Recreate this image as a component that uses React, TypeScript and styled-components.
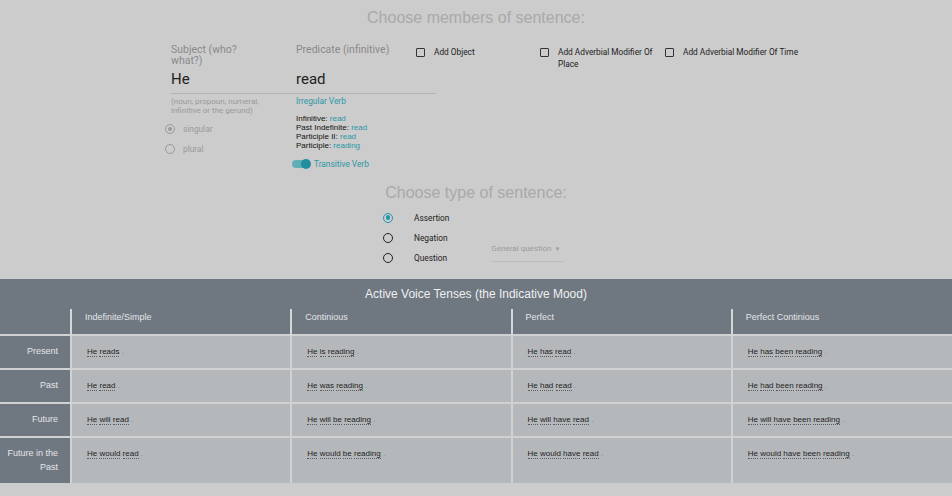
import React, { useState } from 'react';
import styled, { createGlobalStyle } from 'styled-components';

const GlobalStyle = createGlobalStyle`
  body {
    margin: 0;
    background: #cccccc;
    font-family: Roboto, 'Liberation Sans', sans-serif;
  }
`;

const Page = styled.div`
  width: 952px;
  display: flex;
  flex-direction: column;
`;

const SectionTitle = styled.div<{ $top: number }>`
  margin-top: ${(p) => p.$top}px;
  text-align: center;
  font-family: 'Liberation Sans', Arial, sans-serif;
  font-size: 16px;
  line-height: 18px;
  color: #a9a9a9;
`;

const MembersRow = styled.div`
  display: flex;
  margin: 17px 0 0 171px;
`;

const Column = styled.div<{ $width: number }>`
  display: flex;
  flex-direction: column;
  width: ${(p) => p.$width}px;
`;

const FieldLabel = styled.div`
  width: 95px;
  height: 22px;
  font-size: 10.5px;
  line-height: 11px;
  color: #8a8a8a;
`;

const WideLabel = styled(FieldLabel)`
  width: 120px;
`;

const FieldInput = styled.div<{ $width: number }>`
  width: ${(p) => p.$width}px;
  height: 28px;
  box-sizing: border-box;
  padding-top: 4px;
  font-size: 15px;
  line-height: 18px;
  color: #222;
  border-bottom: 1px solid #b4b4b4;
`;

const Helper = styled.div`
  margin-top: 3px;
  font-size: 8px;
  line-height: 9px;
  color: #999;
`;

const RadioList = styled.div<{ $top: number; $left: number }>`
  display: flex;
  flex-direction: column;
  margin: ${(p) => p.$top}px 0 0 ${(p) => p.$left}px;
`;

const RadioRow = styled.label<{ $gap: number }>`
  display: flex;
  align-items: center;
  gap: ${(p) => p.$gap}px;
  height: 20px;
  font-size: 8.3px;
  cursor: pointer;
`;

const RadioCircle = styled.span<{ $on: boolean; $tone: string }>`
  position: relative;
  width: 10px;
  height: 10px;
  box-sizing: border-box;
  border-radius: 50%;
  border: 1.4px solid ${(p) => p.$tone};
  &::after {
    content: '';
    position: absolute;
    inset: 1.6px;
    border-radius: 50%;
    background: ${(p) => (p.$on ? p.$tone : 'transparent')};
  }
`;

const RadioText = styled.span<{ $tone: string }>`
  color: ${(p) => p.$tone};
`;

const Teal = styled.span`
  color: #2a97a6;
`;

const VerbKind = styled.div`
  margin-top: 3px;
  font-size: 8.3px;
  line-height: 9px;
  color: #2a97a6;
`;

const Forms = styled.div`
  margin-top: 7.5px;
  font-family: 'Liberation Sans', Arial, sans-serif;
  font-size: 8px;
  line-height: 9px;
  color: #111;
`;

const ToggleRow = styled.div`
  display: flex;
  align-items: center;
  gap: 4px;
  height: 12px;
  margin: 8px 0 0 -4px;
  font-size: 8.3px;
  color: #2a97a6;
`;

const Track = styled.span`
  position: relative;
  width: 18px;
  height: 8px;
  border-radius: 4px;
  background: #63adb7;
`;

const Thumb = styled.span`
  position: absolute;
  right: -1px;
  top: -1px;
  width: 10px;
  height: 10px;
  border-radius: 50%;
  background: #1f8e9d;
`;

const CheckGroup = styled.label<{ $width: number }>`
  display: flex;
  align-items: flex-start;
  gap: 9px;
  width: ${(p) => p.$width}px;
  padding-top: 2px;
  font-size: 8.3px;
  line-height: 12px;
  color: #222;
`;

const CheckBox = styled.span`
  flex: none;
  width: 9px;
  height: 9px;
  margin-top: 2px;
  box-sizing: border-box;
  border: 1.3px solid #333;
  border-radius: 1px;
`;

const CheckText = styled.span<{ $width: number }>`
  width: ${(p) => p.$width}px;
`;

const TypeRow = styled.div`
  display: flex;
  align-items: flex-end;
  margin: 6px 0 0 383px;
`;

const SelectBox = styled.div`
  display: flex;
  align-items: flex-start;
  justify-content: space-between;
  width: 73px;
  height: 22px;
  box-sizing: border-box;
  padding-top: 4px;
  margin: 0 0 6px 42px;
  font-size: 8px;
  line-height: 10px;
  color: #9b9b9b;
  border-bottom: 1px solid #bdbdbd;
`;

const Caret = styled.span`
  font-size: 6px;
  margin-right: 4px;
`;

const Table = styled.table`
  margin-top: 11px;
  width: 952px;
  border-collapse: collapse;
  table-layout: fixed;
  font-family: 'Liberation Sans', Arial, sans-serif;
`;

const TitleCell = styled.th`
  height: 30px;
  padding: 0;
  background: #6f7780;
  color: #eef0f2;
  font-size: 12px;
  font-weight: normal;
`;

const HeadCell = styled.th<{ $first?: boolean }>`
  height: 16px;
  padding: 0 13px 9px;
  background: #6f7780;
  color: #e4e6e8;
  font-size: 9px;
  line-height: 12px;
  font-weight: normal;
  text-align: left;
  vertical-align: middle;
  border-left: ${(p) => (p.$first ? 'none' : '2px solid #d5d6d8')};
`;

const RowHead = styled.th`
  padding: 8px 12px 9px 4px;
  background: #6f7780;
  color: #e4e6e8;
  font-size: 9px;
  line-height: 14px;
  font-weight: normal;
  text-align: right;
  vertical-align: middle;
  border-top: 2px solid #d0d1d3;
`;

const Cell = styled.td`
  padding: 10px 15px;
  background: #b5b8bb;
  font-size: 8px;
  line-height: 12px;
  color: #1e1e1e;
  vertical-align: top;
  border-top: 2px solid #d0d1d3;
  border-left: 2px solid #d0d1d3;
`;

const Word = styled.span`
  border-bottom: 1px dotted #5a5d60;
`;

const Dot = styled.span`
  color: #7c7f82;
`;

const tenses = ['Indefinite/Simple', 'Continious', 'Perfect', 'Perfect Continious'];

const rows = [
  { name: 'Present', forms: ['He reads', 'He is reading', 'He has read', 'He has been reading'] },
  { name: 'Past', forms: ['He read', 'He was reading', 'He had read', 'He had been reading'] },
  { name: 'Future', forms: ['He will read', 'He will be reading', 'He will have read', 'He will have been reading'] },
  {
    name: 'Future in the Past',
    forms: ['He would read', 'He would be reading', 'He would have read', 'He would have been reading'],
  },
];

const Sentence = ({ text }: { text: string }) => (
  <>
    {text.split(' ').map((w, i) => (
      <React.Fragment key={`w-${i}`}>
        {i > 0 && ' '}
        <Word>{w}</Word>
      </React.Fragment>
    ))}
    <Dot> .</Dot>
  </>
);

const App = () => {
  const [number, setNumber] = useState('singular');
  const [kind, setKind] = useState('Assertion');

  return (
    <Page>
      <GlobalStyle />
      <SectionTitle $top={9}>Choose members of sentence:</SectionTitle>

      <MembersRow>
        <Column $width={125}>
          <FieldLabel>Subject (who? what?)</FieldLabel>
          <FieldInput $width={125}>He</FieldInput>
          <Helper>
            (noun, propoun, numeral,
            <br />
            infinitive or the gerund)
          </Helper>
          <RadioList $top={4} $left={-6}>
            {['singular', 'plural'].map((n) => (
              <RadioRow key={n} $gap={8} onClick={() => setNumber(n)}>
                <RadioCircle $on={number === n} $tone="#9a9a9a" />
                <RadioText $tone="#9a9a9a">{n}</RadioText>
              </RadioRow>
            ))}
          </RadioList>
        </Column>

        <Column $width={120}>
          <WideLabel>Predicate (infinitive)</WideLabel>
          <FieldInput $width={140}>read</FieldInput>
          <VerbKind>Irregular Verb</VerbKind>
          <Forms>
            Infinitive: <Teal>read</Teal>
            <br />
            Past Indefinite: <Teal>read</Teal>
            <br />
            Participle II: <Teal>read</Teal>
            <br />
            Participle: <Teal>reading</Teal>
          </Forms>
          <ToggleRow>
            <Track>
              <Thumb />
            </Track>
            Transitive Verb
          </ToggleRow>
        </Column>

        <CheckGroup $width={124}>
          <CheckBox />
          <CheckText $width={100}>Add Object</CheckText>
        </CheckGroup>
        <CheckGroup $width={125}>
          <CheckBox />
          <CheckText $width={96}>Add Adverbial Modifier Of Place</CheckText>
        </CheckGroup>
        <CheckGroup $width={150}>
          <CheckBox />
          <CheckText $width={130}>Add Adverbial Modifier Of Time</CheckText>
        </CheckGroup>
      </MembersRow>

      <SectionTitle $top={14}>Choose type of sentence:</SectionTitle>

      <TypeRow>
        <RadioList $top={0} $left={0}>
          {['Assertion', 'Negation', 'Question'].map((k) => (
            <RadioRow key={k} $gap={21} onClick={() => setKind(k)}>
              <RadioCircle $on={kind === k} $tone={kind === k ? '#2196a6' : '#222'} />
              <RadioText $tone="#222">{k}</RadioText>
            </RadioRow>
          ))}
        </RadioList>
        <SelectBox>
          General question
          <Caret>▼</Caret>
        </SelectBox>
      </TypeRow>

      <Table>
        <colgroup>
          <col style={{ width: 71 }} />
          <col />
          <col />
          <col />
          <col />
        </colgroup>
        <thead>
          <tr>
            <TitleCell colSpan={5}>Active Voice Tenses (the Indicative Mood)</TitleCell>
          </tr>
          <tr>
            <HeadCell $first />
            {tenses.map((t) => (
              <HeadCell key={t}>{t}</HeadCell>
            ))}
          </tr>
        </thead>
        <tbody>
          {rows.map((r) => (
            <tr key={r.name}>
              <RowHead>{r.name}</RowHead>
              {r.forms.map((f) => (
                <Cell key={f}>
                  <Sentence text={f} />
                </Cell>
              ))}
            </tr>
          ))}
        </tbody>
      </Table>
    </Page>
  );
};

export default App;
